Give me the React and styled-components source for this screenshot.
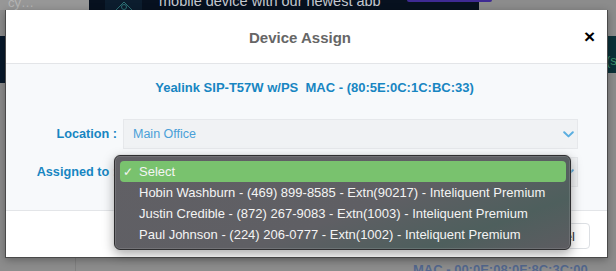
import React from 'react';
import styled, {createGlobalStyle} from 'styled-components';

const GlobalStyle = createGlobalStyle`
  *, *::before, *::after { box-sizing: border-box; }
  html, body { margin: 0; padding: 0; }
  body { font-family: "Liberation Sans", Arial, sans-serif; background: #8c8c8c; }
`;

const users = [
  'Hobin Washburn - (469) 899-8585 - Extn(90217) - Inteliquent Premium',
  'Justin Credible - (872) 267-9083 - Extn(1003) - Inteliquent Premium',
  'Paul Johnson - (224) 206-0777 - Extn(1002) - Inteliquent Premium',
];

function Chevron() {
  return (
    <svg width="11" height="7" viewBox="0 0 11 7">
      <path d="M1.2 1.2 L5.5 5.4 L9.8 1.2" fill="none" stroke="#5aaee0" strokeWidth="2" strokeLinecap="round" strokeLinejoin="round" />
    </svg>
  );
}

function App() {
  return (
    <>
      <GlobalStyle />
      <Screen>
        <Backdrop>
          <TopRow>
            <FadedCorner>cy…</FadedCorner>
            <Banner>
              <BannerIcon>
                <svg width="20" height="8" viewBox="0 0 20 8">
                  <path d="M2 8 L10 0 L18 8" fill="none" stroke="#2c6f74" strokeWidth="1" />
                  <circle cx="10" cy="5" r="2.5" fill="none" stroke="#2c6f74" strokeWidth="1" />
                </svg>
              </BannerIcon>
              <BannerText>mobile device with our newest app</BannerText>
              <BannerButton />
            </Banner>
          </TopRow>
          <MiddleRow>
            <SideBlock $color="#07182a" $h="47px" />
            <SideBlock $color="#0b3038" $h="37px"><SideText>(s</SideText></SideBlock>
          </MiddleRow>
          <BottomRow>
            <BottomText>MAC - 00:0E:08:0F:8C:3C:00</BottomText>
          </BottomRow>
        </Backdrop>

        <Modal>
          <Header>
            <span />
            <Title>Device Assign</Title>
            <Close>×</Close>
          </Header>
          <Body>
            <DeviceLine>{'Yealink SIP-T57W w/PS  MAC - (80:5E:0C:1C:BC:33)'}</DeviceLine>
            <Row>
              <Label>Location :</Label>
              <SelectBox>
                <span>Main Office</span>
                <Chevron />
              </SelectBox>
            </Row>
            <Row $tight>
              <Label>Assigned to :</Label>
              <SelectBox>
                <span>Select</span>
                <Chevron />
              </SelectBox>
              <Popup>
                <Option $active>
                  <Check>✓</Check>
                  <span>Select</span>
                </Option>
                {users.map(u => (
                  <Option key={u}>
                    <Check />
                    <span>{u}</span>
                  </Option>
                ))}
              </Popup>
            </Row>
          </Body>
          <Footer>
            <Button>Assign</Button>
            <Button>Cancel</Button>
          </Footer>
        </Modal>
      </Screen>
    </>
  );
}

export default App;

const Screen = styled.div`
  position: relative;
  width: 616px;
  height: 271px;
  overflow: hidden;
  background: #8c8c8c;
`;

const Backdrop = styled.div`
  display: flex;
  flex-direction: column;
  height: 100%;
`;

const TopRow = styled.div`
  display: flex;
  height: 10px;
  overflow: hidden;
`;

const FadedCorner = styled.div`
  width: 89px;
  flex-shrink: 0;
  background: #979797;
  color: #b4b4b4;
  font-size: 13px;
  line-height: 6px;
  padding-left: 8px;
`;

const Banner = styled.div`
  width: 390px;
  flex-shrink: 0;
  background: #07111f;
  display: flex;
  align-items: flex-end;
  padding-left: 16px;
`;

const BannerIcon = styled.div`
  width: 37px;
  height: 10px;
  flex-shrink: 0;
  background: #0c1d2e;
  display: flex;
  justify-content: center;
  align-items: flex-end;
`;

const BannerText = styled.div`
  margin-left: 17px;
  flex-shrink: 0;
  white-space: nowrap;
  color: #c4c8cf;
  font-size: 14.5px;
  line-height: 10px;
  height: 10px;
  overflow: hidden;
  transform: translateY(-4px);
`;

const BannerButton = styled.div`
  margin-left: 26px;
  align-self: flex-start;
  flex-shrink: 0;
  width: 85px;
  height: 2px;
  border-radius: 0 0 4px 4px;
  background: #3e2a93;
`;

const MiddleRow = styled.div`
  display: flex;
  justify-content: space-between;
  margin-top: 26px;
`;

const SideBlock = styled.div`
  width: 10px;
  height: ${p => p.$h};
  background: ${p => p.$color};
  overflow: hidden;
`;

const SideText = styled.span`
  display: block;
  margin-top: 18px;
  font-size: 13px;
  line-height: 13px;
  color: #3d8f6c;
`;

const BottomRow = styled.div`
  margin-top: auto;
  height: 13px;
  display: flex;
  margin-left: 75px;
  padding-left: 337px;
  border-left: 1px solid #7f7f7f;
`;

const BottomText = styled.span`
  color: #2c4f8f;
  font-size: 13px;
  font-weight: bold;
  line-height: 13px;
  white-space: nowrap;
  transform: translateY(5px);
  opacity: 0.6;
`;

const Modal = styled.div`
  position: absolute;
  left: 5px;
  top: 10px;
  width: 603px;
  height: 248px;
  background: #fff;
  border: 1px solid #4a4a4a;
  border-top: none;
  box-shadow: 0 2px 8px rgba(0, 0, 0, 0.3);
  display: flex;
  flex-direction: column;
`;

const Header = styled.div`
  height: 54px;
  flex-shrink: 0;
  display: grid;
  grid-template-columns: 1fr auto 1fr;
  align-items: center;
  padding: 0 12px 0 0;
  border-bottom: 1px solid #e3e5e8;
`;

const Title = styled.div`
  font-size: 15px;
  font-weight: bold;
  color: #666;
  padding-right: 1px;
  padding-top: 2px;
`;

const Close = styled.div`
  justify-self: end;
  font-size: 19px;
  font-weight: bold;
  color: #000;
  line-height: 1;
`;

const Body = styled.div`
  flex: 1;
  background: #f7f9fb;
  padding-top: 16px;
`;

const DeviceLine = styled.div`
  text-align: center;
  white-space: pre;
  font-size: 13px;
  font-weight: bold;
  color: #1786c2;
  line-height: 16px;
  padding-left: 16px;
  margin-bottom: 23px;
`;

const Row = styled.div`
  position: relative;
  display: grid;
  grid-template-columns: 111px 455px;
  column-gap: 6px;
  align-items: center;
  margin-top: ${p => (p.$tight ? '8px' : '0')};
`;

const Label = styled.div`
  text-align: right;
  font-size: 12.7px;
  font-weight: bold;
  color: #1786c2;
  white-space: nowrap;
`;

const SelectBox = styled.div`
  height: 30px;
  background: #f0f2f4;
  border: 1px solid #e6e8eb;
  display: flex;
  align-items: center;
  justify-content: space-between;
  padding: 0 3px 0 9px;
  font-size: 12.5px;
  color: #4aa0d8;
`;

const Popup = styled.div`
  position: absolute;
  left: 108px;
  top: -2px;
  width: 457px;
  height: 95px;
  padding: 5px 4px 4px 5px;
  border: 1px solid #2e2e30;
  border-radius: 6px;
  background: linear-gradient(160deg, #616065 0%, #5f5f64 55%, #4e5f5d 80%, #5d5c61 100%);
  box-shadow: inset 0 0 0 1px rgba(255, 255, 255, 0.12), 0 0 0 1px rgba(200, 200, 200, 0.35), 0 4px 12px rgba(0, 0, 0, 0.35);
  z-index: 2;
`;

const Option = styled.div`
  height: 21px;
  display: flex;
  align-items: center;
  border-radius: 4px;
  background: ${p => (p.$active ? '#79c26e' : 'transparent')};
  color: #f4f4f4;
  font-size: 13px;
  white-space: nowrap;
`;

const Check = styled.span`
  width: 19px;
  padding-left: 3px;
  font-size: 12px;
`;

const Footer = styled.div`
  height: 47px;
  flex-shrink: 0;
  border-top: 1px solid #e3e5e8;
  display: flex;
  justify-content: flex-end;
  align-items: flex-start;
  gap: 6px;
  padding: 12px 17px 0 0;
`;

const Button = styled.button`
  height: 26px;
  padding: 0 14px;
  background: #fff;
  border: 1px solid #dcdfe3;
  border-radius: 4px;
  font-family: "Liberation Sans", Arial, sans-serif;
  font-size: 13px;
  color: #333;
`;
